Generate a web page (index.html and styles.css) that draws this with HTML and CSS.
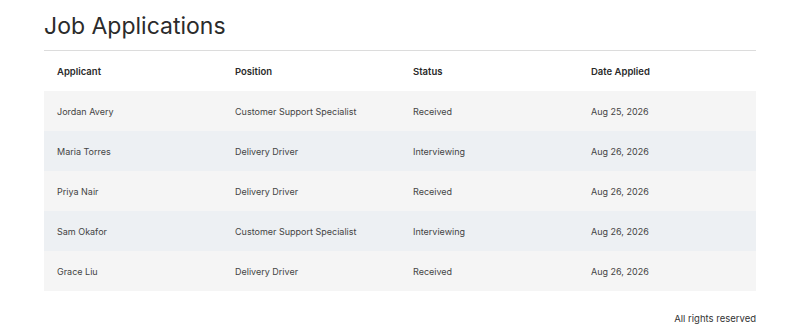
FILE: index.html
```html
<!DOCTYPE html>
<html lang="en">
<head>
<meta charset="utf-8">
<title>Job Applications</title>
<link rel="stylesheet" href="styles.css">
</head>
<body>
<main class="page">
  <h1 class="title">Job Applications</h1>
  <table class="apps">
    <thead>
      <tr><th>Applicant</th><th>Position</th><th>Status</th><th>Date Applied</th></tr>
    </thead>
    <tbody>
      <tr><td>Jordan Avery</td><td>Customer Support Specialist</td><td>Received</td><td>Aug 25, 2026</td></tr>
      <tr><td>Maria Torres</td><td>Delivery Driver</td><td>Interviewing</td><td>Aug 26, 2026</td></tr>
      <tr><td>Priya Nair</td><td>Delivery Driver</td><td>Received</td><td>Aug 26, 2026</td></tr>
      <tr><td>Sam Okafor</td><td>Customer Support Specialist</td><td>Interviewing</td><td>Aug 26, 2026</td></tr>
      <tr><td>Grace Liu</td><td>Delivery Driver</td><td>Received</td><td>Aug 26, 2026</td></tr>
    </tbody>
  </table>
  <footer class="foot">All rights reserved</footer>
</main>
</body>
</html>
```
FILE: styles.css
```css
html, body { margin: 0; padding: 0; background: #fff; }
body { font-family: Inter, "Noto Sans", sans-serif; color: #333; }
.page { width: 712px; margin: 0 auto; padding-top: 11px; }
.title { margin: 0; font-size: 23px; font-weight: 400; line-height: 30px; color: #2b2b2b; padding-bottom: 9px; border-bottom: 1px solid #dcdcdc; }
.apps { width: 100%; border-collapse: collapse; table-layout: fixed; font-size: 9px; }
.apps th, .apps td { text-align: left; padding: 0 13px; height: 40px; }
.apps th { font-weight: 600; color: #2a2a2a; font-size: 9.5px; }
.apps td { color: #444; }
.apps tbody tr:nth-child(odd) { background: #f5f5f5; }
.apps tbody tr:nth-child(even) { background: #edf0f3; }
.foot { text-align: right; font-size: 9.5px; color: #333; margin-top: 22px; }
```
